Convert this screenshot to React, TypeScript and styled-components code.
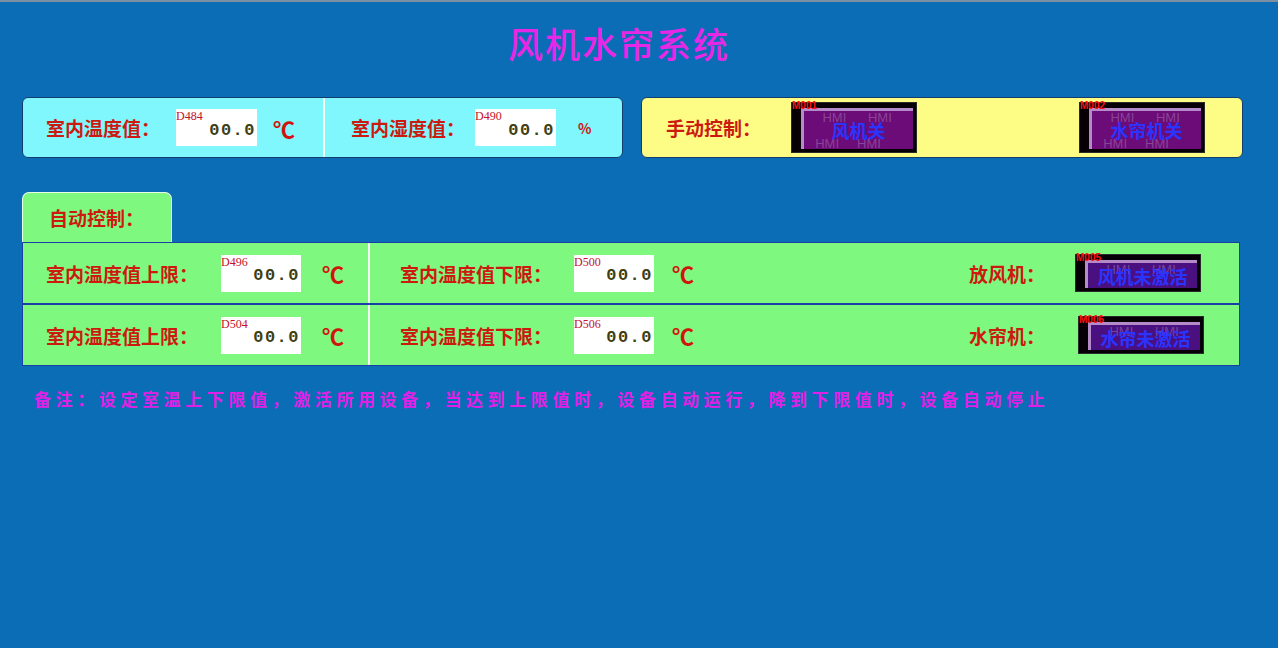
import React from "react";
import styled, { createGlobalStyle } from "styled-components";

const Global = createGlobalStyle`
  html, body { margin: 0; padding: 0; background: #0a6db6; }
  body { font-family: "Noto Sans CJK SC", "Noto Sans", sans-serif; }
`;

const Screen = styled.div`
  width: 1278px;
  height: 648px;
  box-sizing: border-box;
  border-top: 2px solid #7d8fa3;
  background: #0a6db6;
  overflow: hidden;
`;

const Title = styled.h1`
  margin: 0;
  padding: 19px 0 0 508px;
  height: 95px;
  box-sizing: border-box;
  font-family: "Noto Sans CJK SC", sans-serif;
  font-weight: 500;
  font-size: 35px;
  line-height: 44px;
  letter-spacing: 2px;
  color: #e628e6;
`;

const TopRow = styled.div`
  display: flex;
  gap: 18px;
  padding: 0 0 0 22px;
`;

const Panel = styled.div<{ $bg: string; $w: number }>`
  width: ${(p) => p.$w}px;
  height: 61px;
  box-sizing: border-box;
  background: ${(p) => p.$bg};
  border: 1px solid #143c6e;
  border-radius: 6px;
  display: flex;
  align-items: center;
`;

const Cell = styled.div<{ $w?: number; $pl: number; $divider?: boolean }>`
  height: 100%;
  box-sizing: border-box;
  display: flex;
  align-items: center;
  padding-left: ${(p) => p.$pl}px;
  ${(p) => (p.$w ? `width: ${p.$w}px; flex: none;` : "flex: 1;")}
  ${(p) => (p.$divider ? "border-right: 2px solid #f4fff4;" : "")}
`;

const Label = styled.span<{ $w: number }>`
  width: ${(p) => p.$w}px;
  flex: none;
  font-size: 19px;
  font-weight: 700;
  color: #cc1a10;
  white-space: nowrap;
`;

const ValueBox = styled.div<{ $w: number }>`
  position: relative;
  width: ${(p) => p.$w}px;
  height: 37px;
  background: #ffffff;
  flex: none;
  display: flex;
  align-items: center;
  justify-content: flex-end;
  padding-right: 1px;
  box-sizing: border-box;
`;

const Tag = styled.span`
  position: absolute;
  left: 0;
  top: 1px;
  font-family: "Liberation Serif", serif;
  font-size: 12px;
  line-height: 12px;
  color: #c4102a;
`;

const Digits = styled.span`
  font-family: "Liberation Mono", "DejaVu Sans Mono", monospace;
  font-weight: 700;
  font-size: 17px;
  letter-spacing: 1.5px;
  color: #3f3f16;
  margin-top: 5px;
`;

const Unit = styled.span<{ $ml: number; $small?: boolean }>`
  margin-left: ${(p) => p.$ml}px;
  font-family: "Noto Sans CJK SC", serif;
  font-weight: 700;
  font-size: ${(p) => (p.$small ? 14 : 22)}px;
  color: #d0140e;
`;

const Section = styled.div`
  padding: 34px 0 0 22px;
`;

const TabHead = styled.div`
  width: 150px;
  height: 50px;
  box-sizing: border-box;
  background: #7ff87f;
  border: 1px solid #e8ffe8;
  border-bottom: none;
  border-radius: 7px 7px 0 0;
  display: flex;
  align-items: center;
  padding-left: 26px;
`;

const Rows = styled.div`
  width: 1218px;
  box-sizing: border-box;
  border: 1px solid #1a3fa8;
  background: #1a3fa8;
  display: flex;
  flex-direction: column;
  gap: 2px;
`;

const Row = styled.div`
  height: 60px;
  background: #7ff87f;
  display: flex;
  align-items: center;
`;

const Note = styled.p`
  margin: 20px 0 0 34px;
  font-size: 17px;
  font-weight: 700;
  letter-spacing: 4.6px;
  color: #e020e6;
  white-space: nowrap;
`;

/* HMI style push button: black bezel, purple face, bevelled inner frame */
const Btn = styled.div<{ $h: number; $ml: number }>`
  position: relative;
  flex: none;
  margin-left: ${(p) => p.$ml}px;
  width: 126px;
  height: ${(p) => p.$h}px;
  box-sizing: border-box;
  background: #060006;
  border: 1px solid #2a2a2a;
  padding: 5px 3px 3px 9px;
`;

const Face = styled.div<{ $dark?: boolean }>`
  position: relative;
  height: 100%;
  box-sizing: border-box;
  background: ${(p) => (p.$dark ? "#4a1080" : "#6c0c78")};
  border-left: 3px solid #b48ac8;
  border-top: 3px solid #b48ac8;
  display: flex;
  align-items: center;
  justify-content: center;
  overflow: hidden;
`;

const BtnText = styled.span<{ $size: number }>`
  position: relative;
  font-size: ${(p) => p.$size}px;
  font-weight: 700;
  color: #2a34ff;
  white-space: nowrap;
  z-index: 1;
`;

const Watermark = styled.span<{ $top?: number; $bottom?: number }>`
  position: absolute;
  left: 4px;
  ${(p) => (p.$top !== undefined ? `top: ${p.$top}px;` : "")}
  ${(p) => (p.$bottom !== undefined ? `bottom: ${p.$bottom}px;` : "")}
  font-family: "Liberation Sans", Arial, sans-serif;
  font-size: 13px;
  line-height: 13px;
  color: rgba(200, 170, 210, 0.35);
  white-space: pre;
`;

const BtnTag = styled.span`
  position: absolute;
  left: 0;
  top: -2px;
  font-family: "Liberation Sans", Arial, sans-serif;
  font-weight: 700;
  font-size: 10px;
  line-height: 10px;
  color: #ff1010;
  z-index: 2;
`;

type BtnProps = { text: string; tag: string; h: number; ml: number; size: number; tall?: boolean };

function HmiButton({ text, tag, h, ml, size, tall }: BtnProps) {
  return (
    <Btn $h={h} $ml={ml}>
      <BtnTag>{tag}</BtnTag>
      <Face $dark={!tall}>
        <Watermark $top={0}>{"    HMI      HMI"}</Watermark>
        {tall && <Watermark $bottom={-1}>{"  HMI     HMI"}</Watermark>}
        <BtnText $size={size}>{text}</BtnText>
      </Face>
    </Btn>
  );
}

function Reading({ tag, w }: { tag: string; w: number }) {
  return (
    <ValueBox $w={w}>
      <Tag>{tag}</Tag>
      <Digits>00.0</Digits>
    </ValueBox>
  );
}

export default function App() {
  return (
    <>
      <Global />
      <Screen>
        <Title>风机水帘系统</Title>
        <TopRow>
          <Panel $bg="#80f6fd" $w={601}>
            <Cell $w={302} $pl={23} $divider>
              <Label $w={130}>室内温度值：</Label>
              <Reading tag="D484" w={81} />
              <Unit $ml={16}>℃</Unit>
            </Cell>
            <Cell $pl={26}>
              <Label $w={124}>室内湿度值：</Label>
              <Reading tag="D490" w={81} />
              <Unit $ml={22} $small>%</Unit>
            </Cell>
          </Panel>
          <Panel $bg="#fdfd86" $w={602}>
            <Cell $pl={24}>
              <Label $w={125}>手动控制：</Label>
              <HmiButton text="风机关" tag="M001" h={51} ml={0} size={18} tall />
              <HmiButton text="水帘机关" tag="M002" h={51} ml={162} size={18} tall />
            </Cell>
          </Panel>
        </TopRow>
        <Section>
          <TabHead>
            <Label $w={120}>自动控制：</Label>
          </TabHead>
          <Rows>
            <Row>
              <Cell $w={347} $pl={23} $divider>
                <Label $w={175}>室内温度值上限：</Label>
                <Reading tag="D496" w={80} />
                <Unit $ml={21}>℃</Unit>
              </Cell>
              <Cell $w={599} $pl={30}>
                <Label $w={174}>室内温度值下限：</Label>
                <Reading tag="D500" w={80} />
                <Unit $ml={18}>℃</Unit>
              </Cell>
              <Cell $pl={0}>
                <Label $w={106}>放风机：</Label>
                <HmiButton text="风机未激活" tag="M005" h={38} ml={0} size={18} />
              </Cell>
            </Row>
            <Row>
              <Cell $w={347} $pl={23} $divider>
                <Label $w={175}>室内温度值上限：</Label>
                <Reading tag="D504" w={80} />
                <Unit $ml={21}>℃</Unit>
              </Cell>
              <Cell $w={599} $pl={30}>
                <Label $w={174}>室内温度值下限：</Label>
                <Reading tag="D506" w={80} />
                <Unit $ml={18}>℃</Unit>
              </Cell>
              <Cell $pl={0}>
                <Label $w={109}>水帘机：</Label>
                <HmiButton text="水帘未激活" tag="M006" h={38} ml={0} size={18} />
              </Cell>
            </Row>
          </Rows>
        </Section>
        <Note>备注：设定室温上下限值，激活所用设备，当达到上限值时，设备自动运行，降到下限值时，设备自动停止</Note>
      </Screen>
    </>
  );
}
